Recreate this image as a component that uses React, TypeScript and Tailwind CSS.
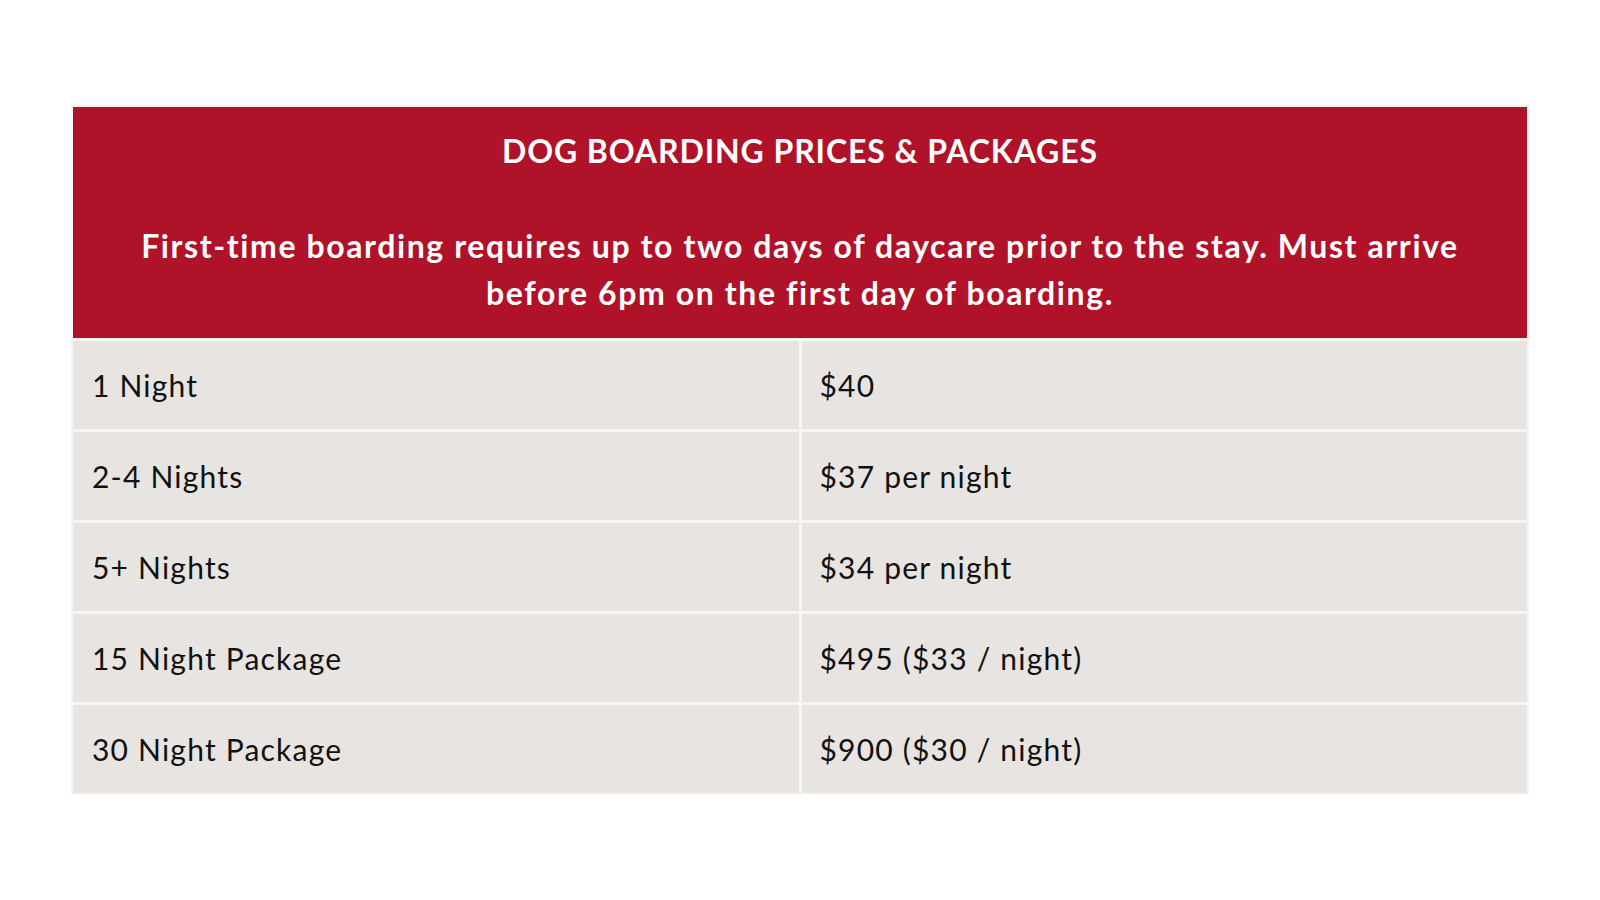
const rows: [string, string][] = [
  ["1 Night", "$40"],
  ["2-4 Nights", "$37 per night"],
  ["5+ Nights", "$34 per night"],
  ["15 Night Package", "$495 ($33 / night)"],
  ["30 Night Package", "$900 ($30 / night)"],
]

export default function App() {
  return (
    <div className="min-h-[900px] bg-white pt-[105px] pl-[71px] pr-[71px] font-['Lato','Noto_Sans',sans-serif]">
      <div className="border-[2px] border-[#f6f4f1] bg-[#f8f6f3]">
        <div className="bg-[#af1229] px-6 pt-[23px] pb-[22px] text-center font-bold text-white">
          <h1 className="text-[32px] leading-[41px] tracking-[0.9px]">DOG BOARDING PRICES &amp; PACKAGES</h1>
          <p className="mt-[51px] text-[32px] leading-[47px] tracking-[1.6px]">
            First-time boarding requires up to two days of daycare prior to the stay. Must arrive
            <br />
            before 6pm on the first day of boarding.
          </p>
        </div>
        <div className="mt-[3px] grid grid-cols-2 gap-[3px]">
          {rows.map(([label, price]) => (
            <div key={label} className="contents">
              <div className="flex h-[88px] items-center bg-[#e8e4e1] pl-[19px] text-[30px] tracking-[1.2px] text-[#111]">
                {label}
              </div>
              <div className="flex h-[88px] items-center bg-[#e8e4e1] pl-[18px] text-[30px] tracking-[1.2px] text-[#111]">
                {price}
              </div>
            </div>
          ))}
        </div>
      </div>
    </div>
  )
}
